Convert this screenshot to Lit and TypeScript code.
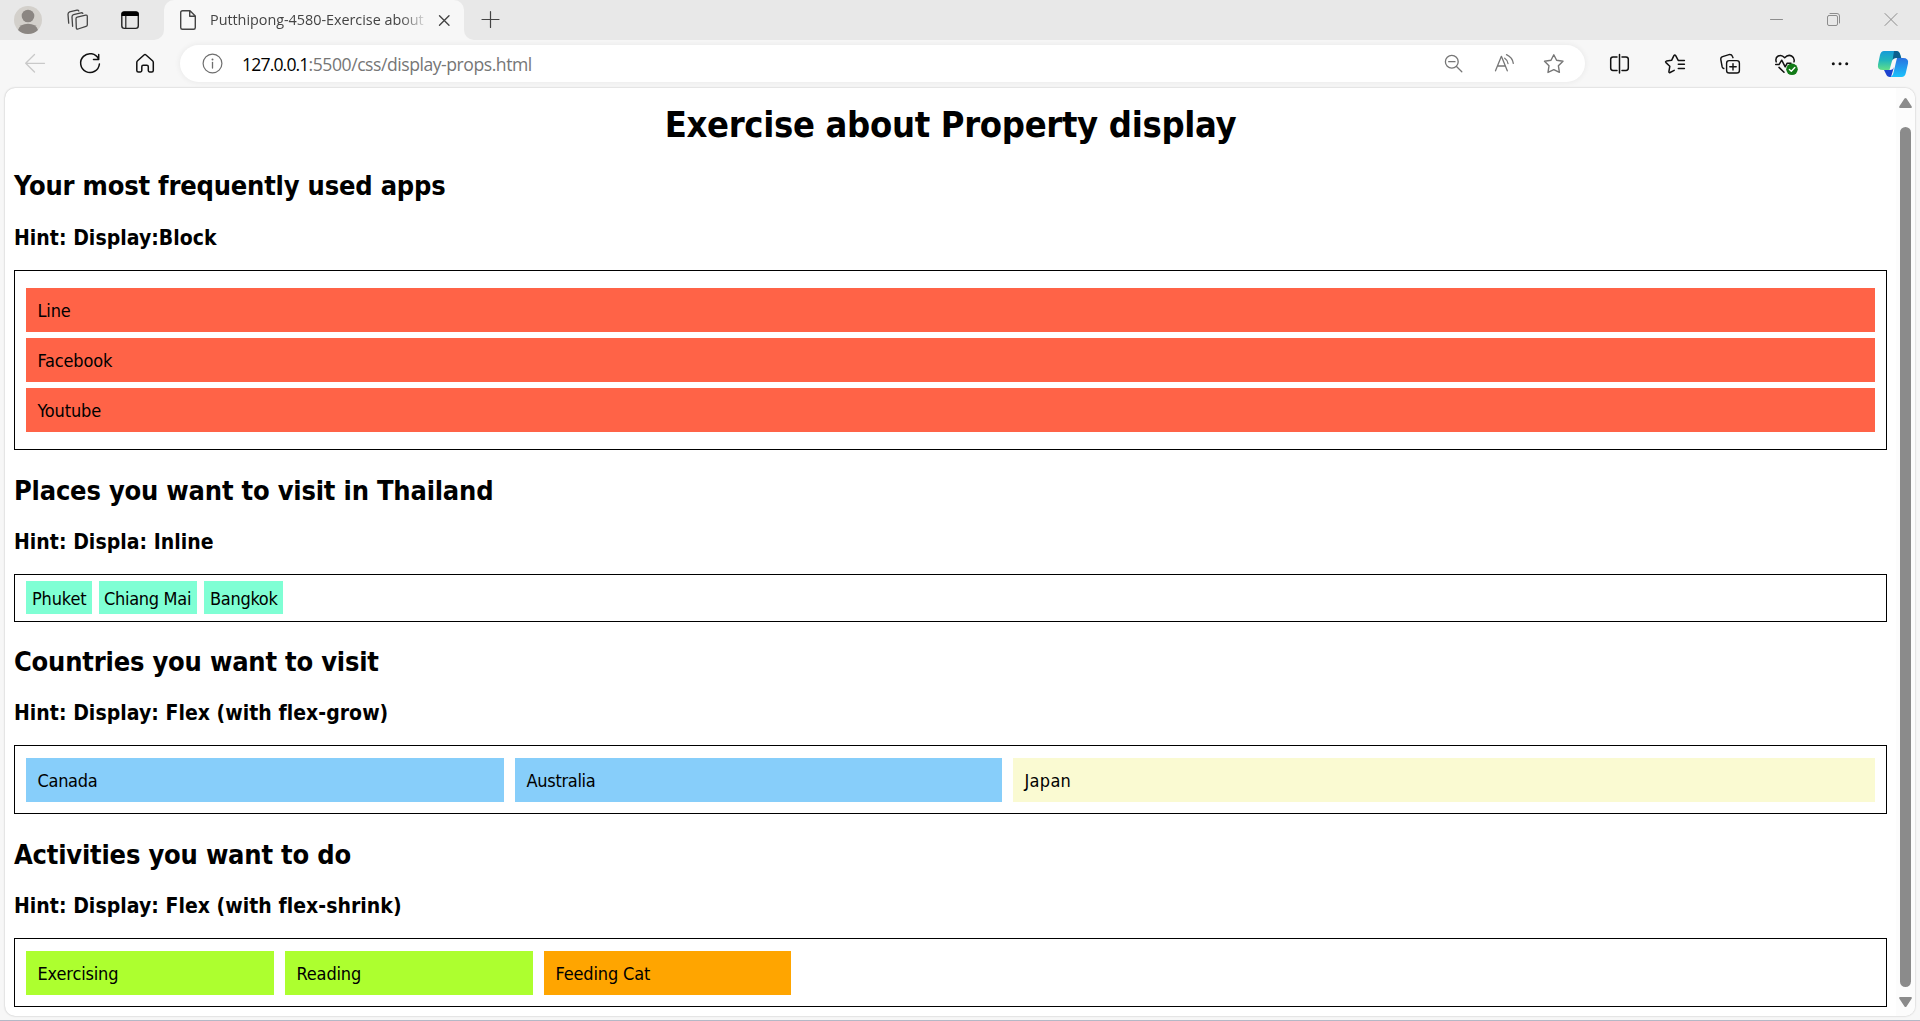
import { LitElement, html, css, svg } from "lit";
import { customElement } from "lit/decorators.js";

// Each icon is drawn in window coordinates: the viewBox starts at the icon's slot.
const slot = (x: number, w: number, y: number, h: number, body: unknown) =>
  html`<svg class="slot" width=${w} height=${h} viewBox="${x} ${y} ${w} ${h}" fill="none" stroke-linecap="round" stroke-linejoin="round">${body}</svg>`;
const top = (x: number, w: number, body: unknown) => slot(x, w, 0, 40, body);
const bar = (x: number, w: number, body: unknown) => slot(x, w, 45, 37, body);

@customElement("app-root")
export class AppRoot extends LitElement {
  static styles = css`
    :host { display: block; }
    * { box-sizing: border-box; }
    .window { width: 1920px; height: 1021px; display: flex; flex-direction: column; background: #f7f7f7; overflow: hidden; border-bottom: 1px solid #b3b8c6; }
    .slot { display: block; flex: none; }
    .tabs { height: 40px; flex: none; display: flex; background: #e8e8e8; }
    .left { width: 164px; display: flex; border-bottom-right-radius: 10px; background: #e8e8e8; flex: none; }
    .mid { display: flex; background: linear-gradient(#e8e8e8 50%, #f7f7f7 50%); flex: 1; }
    .tab { width: 300px; display: flex; align-items: center; background: #f7f7f7; border-radius: 10px 10px 0 0; }
    .tabtitle { width: 216px; font: 14.4px/20px "Open Sans", sans-serif; letter-spacing: -0.03px; color: #444; white-space: nowrap; overflow: hidden; -webkit-mask-image: linear-gradient(90deg, #000 190px, transparent 219px); }
    .rest { flex: 1; display: flex; justify-content: flex-end; background: #e8e8e8; border-bottom-left-radius: 10px; }
    .grow { flex: 1; }
    .toolbar { height: 48px; flex: none; display: flex; align-items: center; padding-bottom: 1px; }
    .address { width: 1405px; height: 37px; border-radius: 19px; background: #fff; display: flex; align-items: center; box-shadow: 0 0 6px rgba(0,0,0,.07); }
    .url { font: 17.6px/24px "Open Sans", sans-serif; letter-spacing: -0.46px; color: #767676; white-space: nowrap; }
    .host { color: #000; letter-spacing: -0.85px; }
    .page { width: 1910px; height: 928px; margin-left: 5px; background: #fff; border-radius: 10px; box-shadow: 0 0 2px rgba(0,0,0,.28); display: flex; overflow: hidden; }
    .content { width: 1891px; padding: 15px 9px 0 9px; font: 18px/22px "DejaVu Sans Condensed", "DejaVu Sans", sans-serif; font-stretch: condensed; letter-spacing: -0.15px; color: #000; display: flex; flex-direction: column; }
    h1, h2, h3 { margin: 0; white-space: nowrap; }
    h1 { font-size: 36px; line-height: 44px; text-align: center; letter-spacing: -0.32px; }
    h2 { font-size: 27px; line-height: 34px; margin-top: 24px; letter-spacing: -0.2px; }
    h3 { font-size: 21px; line-height: 26px; margin: 21px 0 19px; letter-spacing: 0.04px; }
    h1 + h2 { margin-top: 22px; padding-bottom: 1px; }
    .raised { margin-top: 23px; }
    .box { border: 1px solid #000; width: 1873px; padding: 12px 11px 11px; flex: none; display: flex; gap: 11px; }
    .item { height: 44px; padding: 12px 11px 10px 11.5px; white-space: nowrap; }
    .block { flex-direction: column; gap: 6px; padding: 17px 11px; height: 180px; }
    .block .item { background: #ff6347; }
    .inline { height: 48px; padding: 6px 11px; gap: 7px; }
    .chip { height: 33px; padding: 7px 0 4px 6px; background: #7fffd4; white-space: nowrap; }
    .sky { background: #87cefa; } .gold { background: #fafad2; } .green { background: #adff2f; } .orange { background: #ffa500; }
    .w66 { width: 66px; } .w98 { width: 98px; padding-left: 5px; } .w79 { width: 79px; }
    .w478 { width: 478px; } .w487 { width: 487px; } .w248 { width: 248px; } .w247 { width: 247px; }
    .tight { letter-spacing: -0.3px; } .loose { letter-spacing: 0.3px; }
    .bar { width: 19px; background: #fcfcfc; }
  `;

  render() {
    return html`<div class="window">
      <div class="tabs">
        <div class="mid">
          <div class="left">
            ${top(0, 56, svg`<circle cx="28" cy="20" r="14" fill="#d3d0cb"/><circle cx="28" cy="16" r="6.3" fill="#8b8682"/><path d="M18 30Q20 23.7 28 23.7T38 30Q34 34 28 34T18 30Z" fill="#8b8682"/>`)}
            ${top(56, 44, svg`<g stroke="#444" stroke-width="1.3"><path d="M76 18.8Q76 17.6 77.2 17.2L85.6 15.1Q87.3 14.8 87.3 16.5V25Q87.3 26 86 26.4L78 29Q76.3 29.4 76.3 27.8Z"/><path d="M72.6 26.3L72 17Q72 15.2 73.6 14.7L81 12.8Q82.3 12.6 82.8 13.4M68.7 23.2L68 14.2Q68 12.4 69.6 11.8L77 10.2Q78.4 10 78.8 11"/></g>`)}
            ${top(100, 64, svg`<rect x="121.8" y="12" width="16.5" height="16.4" rx="2.6" stroke="#222" stroke-width="1.4"/><path d="M121.5 16V14Q121.5 11.4 124 11.4H136Q138.7 11.4 138.7 14V16Z" fill="#000"/><path d="M125.8 16V28" stroke="#222" stroke-width="1.2"/>`)}
          </div>
          <div class="tab">
            ${top(164, 46, svg`<path d="M182.6 10.7H190L195.3 16V27.5Q195.3 29.3 193.6 29.3H182.4Q180.7 29.3 180.7 27.5V12.5Q180.7 10.7 182.6 10.7ZM189.7 10.9V16.2H195" stroke="#444" stroke-width="1.4"/>`)}
            <div class="tabtitle">Putthipong-4580-Exercise about</div>
            ${top(426, 38, svg`<path d="M439.5 15.7L449 25.2M449 15.7L439.5 25.2" stroke="#444" stroke-width="1.4"/>`)}
          </div>
          <div class="rest">
            ${top(464, 50, svg`<path d="M482 19.5H499M490.5 11.5V27.5" stroke="#444" stroke-width="1.2"/>`)}
            <div class="grow"></div>
            ${top(1748, 57, svg`<path d="M1770.5 19.5H1782.5" stroke="#8d8d8d"/>`)}
            ${top(1805, 57, svg`<g stroke="#8d8d8d"><rect x="1827.5" y="15.5" width="10" height="10" rx="1.5"/><path d="M1830 13.5H1837Q1839.5 13.5 1839.5 16V23"/></g>`)}
            ${top(1862, 58, svg`<path d="M1885 13.5L1897 25.5M1897 13.5L1885 25.5" stroke="#8d8d8d"/>`)}
          </div>
        </div>
      </div>
      <div class="toolbar">
        ${bar(0, 70, svg`<path d="M44.5 63.3H26M34.5 54.5L25.7 63.3L34.5 72" stroke="#c9c9c9" stroke-width="1.3"/>`)}
        ${bar(70, 40, svg`<path d="M98.6 59.2A9.4 9.4 0 1 0 99.4 64M98.7 54.4V59.4H93.5" stroke="#111" stroke-width="1.5"/>`)}
        ${bar(110, 70, svg`<path d="M138.4 72Q136.8 72 136.8 70.5V62.4Q136.8 61.4 137.6 60.7L144 55Q145 54.2 146 55L152.5 60.7Q153.3 61.4 153.3 62.4V70.5Q153.3 72 151.8 72H149.6Q148.3 72 148.3 70.6V66.8Q148.3 65.2 146.8 65.2H143.2Q141.8 65.2 141.8 66.8V70.6Q141.8 72 140.4 72Z" stroke="#111" stroke-width="1.5"/>`)}
        <div class="address">
          ${bar(180, 62, svg`<circle cx="212.5" cy="63.5" r="9.4" stroke="#6e6e6e" stroke-width="1.2"/><path d="M212.5 62.5V68" stroke="#6e6e6e" stroke-width="1.3"/><circle cx="212.5" cy="59.5" r="1" fill="#6e6e6e"/>`)}
          <div class="url"><span class="host">127.0.0.1</span>:5500/css/display-props.html</div>
          <div class="grow"></div>
          ${bar(1428, 50, svg`<g stroke="#767676" stroke-width="1.3"><circle cx="1451.8" cy="61.7" r="6.4"/><path d="M1448.7 61.7H1455M1456.5 66.5L1461.8 71.8"/></g>`)}
          ${bar(1478, 51, svg`<g stroke="#767676" stroke-width="1.3"><path d="M1495.5 70.8L1501.4 56.3L1507.3 70.8M1497.5 66H1505.3M1504.7 58.2Q1507.5 60 1508 63.5M1506.5 54.7Q1512.4 57.5 1513.3 63.3"/></g>`)}
          ${bar(1529, 56, svg`<path d="M1553.8 54.8L1556.6 60.3L1563 61.2L1558.4 65.8L1559.4 72.4L1553.8 69.6L1548 72.4L1549 65.8L1544.5 61.2L1551 60.3Z" stroke="#767676" stroke-width="1.4"/>`)}
        </div>
        ${bar(1585, 69, svg`<path d="M1617 57H1613Q1610.7 57 1610.7 59.3V68Q1610.7 70.4 1613 70.4H1617M1622 57H1626Q1628.3 57 1628.3 59.3V68Q1628.3 70.4 1626 70.4H1622M1619.5 54.5V73" stroke="#111" stroke-width="1.5"/>`)}
        ${bar(1654, 42, svg`<path d="M1684.4 60.4H1678.2L1675.7 55.7Q1674.8 54.4 1673.9 55.7L1671.6 60.3L1666.4 61.1Q1665 61.5 1666 62.6L1669.8 66.3L1668.9 71.6Q1668.8 73 1670.1 72.5L1674.2 70.3M1678.3 64.3H1684.4M1678.3 68.4H1684.4" stroke="#111" stroke-width="1.5"/>`)}
        ${bar(1696, 68, svg`<g stroke="#111" stroke-width="1.4"><rect x="1726.6" y="60.6" width="12.8" height="12.4" rx="2.6"/><path d="M1733 63.6V70M1729.8 66.8H1736.2M1723.8 68.5Q1722.6 68.1 1722.2 67L1720.8 59.5Q1720.5 57.3 1722.6 56.6L1729 54.6Q1731.7 54.3 1732.5 56.5L1733 57.7"/></g>`)}
        ${bar(1764, 44, svg`<g stroke="#111" stroke-width="1.5"><path d="M1776.2 61.8Q1775 57.8 1778.2 56Q1781.7 54.3 1784.7 57.7Q1788 54.2 1791.6 56Q1795 58 1794 61.8M1775.7 64.6H1779L1781.7 60.2L1785.2 66.8L1787.2 63.2H1791M1779 67.4L1784 72.3"/></g><circle cx="1792" cy="69.3" r="5.8" fill="#117a17"/><path d="M1789.4 69.5L1791.3 71.2L1794.8 67.6" stroke="#fff" stroke-width="1.4"/>`)}
        ${bar(1808, 64, svg`<g fill="#111"><circle cx="1833.3" cy="63.8" r="1.5"/><circle cx="1840" cy="63.8" r="1.5"/><circle cx="1846.7" cy="63.8" r="1.5"/></g>`)}
        ${bar(1872, 48, svg`<defs>
          <linearGradient id="a" x1="0" y1="0" x2="0" y2="1"><stop stop-color="#149bd8"/><stop offset=".5" stop-color="#22b7bb"/><stop offset="1" stop-color="#62df88"/></linearGradient>
          <linearGradient id="b" x1="0" y1="0" x2="0" y2="1"><stop stop-color="#2a72e0"/><stop offset="1" stop-color="#1cc2fb"/></linearGradient></defs>
          <path d="M1884 51H1896Q1899 51 1900 54L1901 58H1896Q1893 58 1892 61L1889.5 70H1883Q1877 70 1878 64.5L1880 55Q1881 51 1884 51Z" fill="url(#a)"/>
          <path d="M1894 51H1896.5Q1899 51 1900 54L1901.3 58H1896Q1893.5 58 1892.6 60Z" fill="#0b5f8e"/>
          <path d="M1884 70H1890Q1893 70 1894 67L1891 77H1890Q1887 77 1886 74Z" fill="#1d43cf"/>
          <path d="M1897 58H1903Q1909 58 1908 63.5L1905.8 73Q1905 77 1901.5 77H1890Q1892.5 76.5 1893.4 73L1896 62Q1897 58 1897 58Z" fill="url(#b)"/>`)}
      </div>
      <div class="page">
        <div class="content">
          <h1>Exercise about Property display</h1>
          <h2>Your most frequently used apps</h2>
          <h3>Hint: Display:Block</h3>
          <div class="box block"><div class="item">Line</div><div class="item">Facebook</div><div class="item">Youtube</div></div>
          <h2>Places you want to visit in Thailand</h2>
          <h3>Hint: Displa: Inline</h3>
          <div class="box inline"><div class="chip w66">Phuket</div><div class="chip w98 tight">Chiang Mai</div><div class="chip w79 tight">Bangkok</div></div>
          <h2 class="raised">Countries you want to visit</h2>
          <h3>Hint: Display: Flex (with flex-grow)</h3>
          <div class="box"><div class="item sky w478 tight">Canada</div><div class="item sky w487 tight">Australia</div><div class="item gold grow loose">Japan</div></div>
          <h2>Activities you want to do</h2>
          <h3>Hint: Display: Flex (with flex-shrink)</h3>
          <div class="box"><div class="item green w248">Exercising</div><div class="item green w248">Reading</div><div class="item orange w247">Feeding Cat</div></div>
        </div>
        <svg class="bar" width="19" height="928" viewBox="1896 88 19 928"><g fill="#8b8b8b"><rect x="1900" y="127" width="11" height="860" rx="5.5"/><path d="M1904.5 98.6Q1905.5 97.4 1906.5 98.6L1911.6 106.2Q1912.3 108 1911 108H1900Q1898.7 108 1899.4 106.2ZM1904.5 1006.4Q1905.5 1007.6 1906.5 1006.4L1911.6 998.8Q1912.3 997 1911 997H1900Q1898.7 997 1899.4 998.8Z"/></g></svg>
      </div>
    </div>`;
  }
}
